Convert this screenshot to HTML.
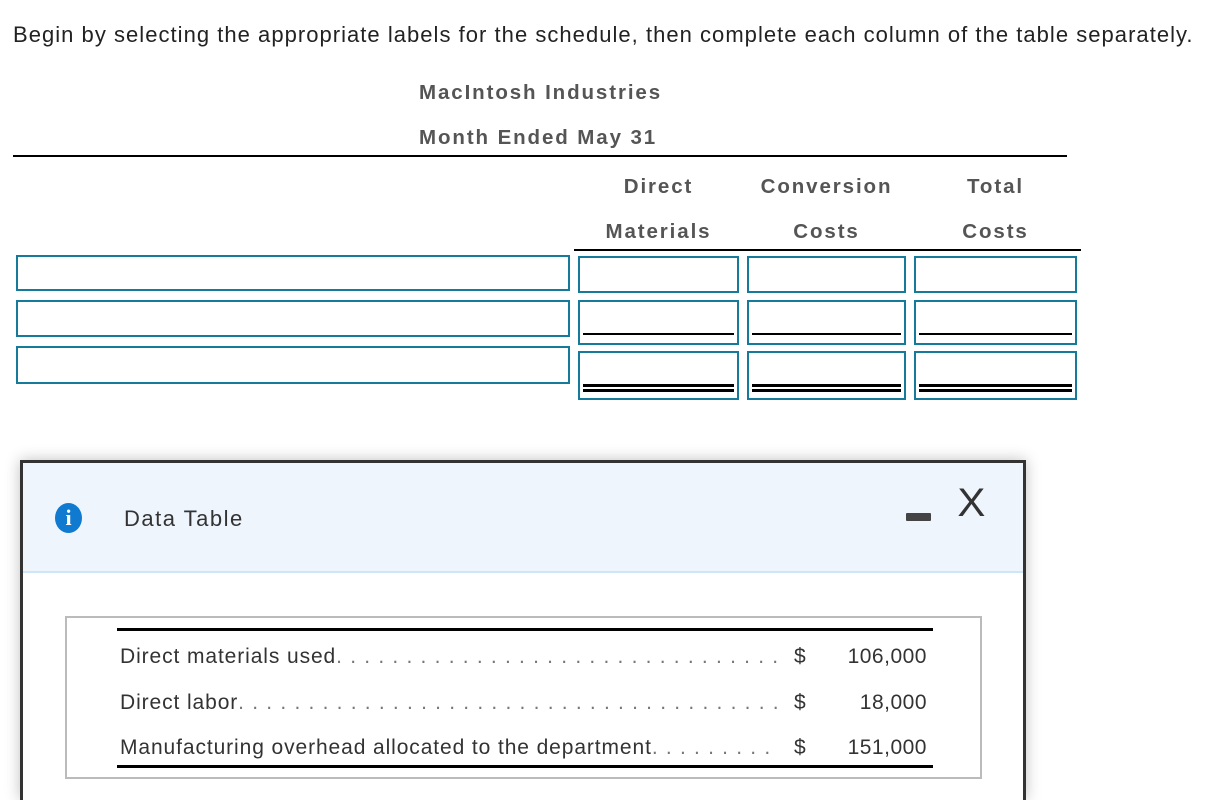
<!DOCTYPE html>
<html><head><style>
body{margin:0;width:1210px;height:782px;overflow:hidden;background:#fff;font-family:"Liberation Sans",sans-serif;position:relative}
.a{position:absolute}
.t{white-space:nowrap}
.h{font-weight:bold;color:#555;font-size:20.5px;letter-spacing:1.9px}
.b{position:absolute;border:2px solid #167b9a;box-sizing:border-box;background:#fff}
.l1{position:absolute;height:2px;background:#000}
.r{position:absolute;left:97px;width:660px;font-size:21px;color:#333;letter-spacing:0.9px;white-space:nowrap;overflow:hidden}
.r span{color:#777;letter-spacing:1.2px}
</style></head><body>
<div class="a t" style="left:13px;top:22px;font-size:22px;color:#222;letter-spacing:1.03px">Begin by selecting the appropriate labels for the schedule, then complete each column of the table separately.</div>
<div class="a t h" style="left:419px;top:81px">MacIntosh Industries</div>
<div class="a t h" style="left:419px;top:126px">Month Ended May 31</div>
<div class="l1" style="left:13px;top:155px;width:1054px"></div>
<div class="a t h" style="left:578px;width:161px;text-align:center;top:175px">Direct</div>
<div class="a t h" style="left:747px;width:159px;text-align:center;top:175px">Conversion</div>
<div class="a t h" style="left:914px;width:163px;text-align:center;top:175px">Total</div>
<div class="a t h" style="left:578px;width:161px;text-align:center;top:220px">Materials</div>
<div class="a t h" style="left:747px;width:159px;text-align:center;top:220px">Costs</div>
<div class="a t h" style="left:914px;width:163px;text-align:center;top:220px">Costs</div>
<div class="l1" style="left:574px;top:249px;width:507px"></div>

<div class="b" style="left:16px;top:255px;width:554px;height:36px"></div>
<div class="b" style="left:16px;top:300px;width:554px;height:37px"></div>
<div class="b" style="left:16px;top:346px;width:554px;height:38px"></div>

<div class="b" style="left:578px;top:256px;width:161px;height:37px"></div>
<div class="b" style="left:747px;top:256px;width:159px;height:37px"></div>
<div class="b" style="left:914px;top:256px;width:163px;height:37px"></div>
<div class="b" style="left:578px;top:300px;width:161px;height:45px"></div>
<div class="b" style="left:747px;top:300px;width:159px;height:45px"></div>
<div class="b" style="left:914px;top:300px;width:163px;height:45px"></div>
<div class="b" style="left:578px;top:351px;width:161px;height:49px"></div>
<div class="b" style="left:747px;top:351px;width:159px;height:49px"></div>
<div class="b" style="left:914px;top:351px;width:163px;height:49px"></div>
<div class="l1" style="left:583px;top:333px;width:151px"></div>
<div class="l1" style="left:752px;top:333px;width:149px"></div>
<div class="l1" style="left:919px;top:333px;width:153px"></div>
<div class="l1" style="left:583px;top:384px;width:151px;height:3px"></div>
<div class="l1" style="left:752px;top:384px;width:149px;height:3px"></div>
<div class="l1" style="left:919px;top:384px;width:153px;height:3px"></div>
<div class="l1" style="left:583px;top:389px;width:151px;height:3px"></div>
<div class="l1" style="left:752px;top:389px;width:149px;height:3px"></div>
<div class="l1" style="left:919px;top:389px;width:153px;height:3px"></div>

<div class="a" style="left:20px;top:460px;width:1006px;height:340px;border:3px solid #333;border-bottom:none;box-sizing:border-box;background:#fff;box-shadow:0 0 14px rgba(0,0,0,.25)">
  <div class="a" style="left:0;top:0;width:1000px;height:108px;background:#eff5fd;border-bottom:2px solid #cfe5f8"></div>
  <div class="a" style="left:32px;top:40px;width:27px;height:30px;border-radius:50%;background:#0f7ad0;color:#fff;font-family:'Liberation Serif',serif;font-weight:bold;font-size:22px;text-align:center;line-height:30px">i</div>
  <div class="a t" style="left:101px;top:43px;font-size:22px;color:#333;letter-spacing:1.5px">Data Table</div>
  <div class="a" style="left:883px;top:50px;width:25px;height:8px;background:#444;border-radius:1px"></div>
  <div class="a t" style="left:935px;top:18px;font-size:40px;color:#333;font-weight:300;transform:scaleX(1.05)">X</div>
  <div class="a" style="left:42px;top:153px;width:917px;height:163px;border:2px solid #bbb;box-sizing:border-box"></div>
  <div class="l1" style="left:94px;top:165px;width:816px;height:3px"></div>
  <div class="l1" style="left:94px;top:302px;width:816px;height:3px"></div>
  <div class="r" style="top:182px">Direct materials used<span>. . . . . . . . . . . . . . . . . . . . . . . . . . . . . . . . . . . . . . . . . . . . . . . . . . . . . . . .</span></div>
  <div class="r" style="top:228px">Direct labor<span>. . . . . . . . . . . . . . . . . . . . . . . . . . . . . . . . . . . . . . . . . . . . . . . . . . . . . . . . . . . . . . . . . . . .</span></div>
  <div class="r" style="top:273px">Manufacturing overhead allocated to the department<span>. . . . . . . . . . . . . . . . . . . . .</span></div>
  <div class="a t" style="left:771px;top:182px;font-size:21px;color:#333">$</div>
  <div class="a t" style="left:771px;top:228px;font-size:21px;color:#333">$</div>
  <div class="a t" style="left:771px;top:273px;font-size:21px;color:#333">$</div>
  <div class="a t" style="left:790px;width:114px;text-align:right;top:182px;font-size:21px;color:#333;letter-spacing:0.5px">106,000</div>
  <div class="a t" style="left:790px;width:114px;text-align:right;top:228px;font-size:21px;color:#333;letter-spacing:0.5px">18,000</div>
  <div class="a t" style="left:790px;width:114px;text-align:right;top:273px;font-size:21px;color:#333;letter-spacing:0.5px">151,000</div>
</div>
</body></html>
